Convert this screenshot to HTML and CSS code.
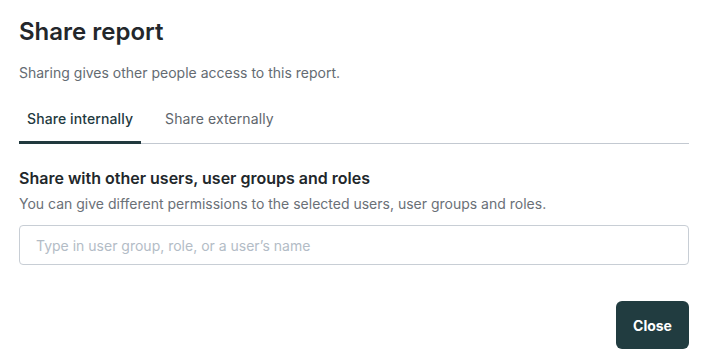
FILE: index.html
```html
<!DOCTYPE html>
<html lang="en">
<head>
    <meta charset="UTF-8">
    <title>Share report</title>
    <link rel="stylesheet" href="styles.css">
</head>
<body>
    <div class="dialog">
        <h1>Share report</h1>
        <p class="intro">Sharing gives other people access to this report.</p>

        <div class="tabs">
            <div class="tab active">Share internally</div>
            <div class="tab">Share externally</div>
        </div>

        <div class="section">
            <h2>Share with other users, user groups and roles</h2>
            <p class="hint">You can give different permissions to the selected users, user groups and roles.</p>
            <input class="search" type="text" placeholder="Type in user group, role, or a user’s name">
        </div>

        <div class="footer">
            <button class="close">Close</button>
        </div>
    </div>
</body>
</html>
```

FILE: styles.css
```css
body {
    font-family: Inter, "Noto Sans", sans-serif;
    background-color: #ffffff;
    color: #22282d;
    margin: 0;
}

.dialog {
    padding: 16px 21px 9px 19px;
}

h1 {
    font-size: 24px;
    font-weight: 600;
    line-height: 32px;
    margin: 0;
    color: #23272b;
}

.intro {
    font-size: 14px;
    line-height: 20px;
    color: #646b72;
    margin: 15px 0 0;
}

.tabs {
    display: flex;
    border-bottom: 1px solid #c3c9d1;
    margin-top: 16px;
}

.tab {
    font-size: 14px;
    line-height: 20px;
    padding: 10px 8px 12px;
    margin-bottom: -1px;
    color: #5e656c;
    border-bottom: 3px solid transparent;
    margin-right: 16px;
    letter-spacing: 0.1px;
}

.tab.active {
    color: #1f3a3f;
    font-weight: 500;
    border-bottom-color: #21393e;
}

.section {
    margin-top: 23px;
}

h2 {
    font-size: 16px;
    font-weight: 600;
    line-height: 22px;
    margin: 0;
    color: #22272b;
}

.hint {
    font-size: 14px;
    line-height: 20px;
    color: #6a7077;
    margin: 5px 0 0;
}

.search {
    display: block;
    box-sizing: border-box;
    width: 100%;
    height: 40px;
    margin-top: 11px;
    padding: 0 16px;
    border: 1px solid #c8ced5;
    border-radius: 4px;
    font-family: inherit;
    font-size: 14px;
    color: #22282d;
}

.search::placeholder {
    color: #b3bcc6;
}

.footer {
    display: flex;
    justify-content: flex-end;
    margin-top: 36px;
}

.close {
    background-color: #213c40;
    color: white;
    border: none;
    border-radius: 6px;
    width: 73px;
    height: 48px;
    font-family: inherit;
    font-size: 14px;
    font-weight: 700;
    cursor: pointer;
}
```
